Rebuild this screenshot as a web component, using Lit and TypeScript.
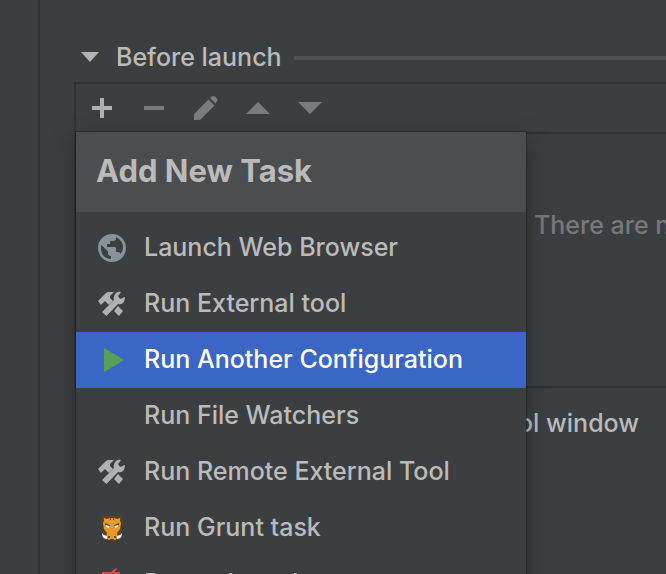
import { LitElement, html, css, svg, nothing, TemplateResult } from "lit";
import { customElement, property, state } from "lit/decorators.js";

type IconName =
  | "add" | "remove" | "edit" | "up" | "down" | "chevron"
  | "web" | "tools" | "run" | "grunt" | "gulp";

const shapes: Record<IconName, TemplateResult> = {
  add: svg`<path fill="#afb1b3" d="M14 6h4v8h8v4h-8v8h-4v-8H6v-4h8z"/>`,
  remove: svg`<path fill="#7b7c7d" d="M6 14h20v4H6z"/>`,
  edit: svg`<path fill="#7b7c7d" d="M4 28v-6L18.500 7.500l6 6L10 28zM20 6l2-1.500q1.500-1 3 0l2 2q1.500 1.500 0 3l-1.500 2z"/>`,
  up: svg`<path fill="#7b7c7d" d="M4 22 16 10l12 12z"/>`,
  down: svg`<path fill="#7b7c7d" d="M4 10h24L16 22z"/>`,
  chevron: svg`<path fill="#afb1b3" d="M7 10h18L16 20z"/>`,
  web: svg`<circle cx="16" cy="16" r="14" fill="#87939a"/>
    <path fill="#3c3f41" d="M20 5v1q0 3-3 3h-3v3h-3v3h8q1 0 1 1v4h2q2 0 2.500 2 2.500-3 2.500-6 0-7.500-7-11zM5.500 13 12 19.500V21q0 3 3 3v3Q5 26 5 16q0-2 .5-3z"/>`,
  tools: svg`<path fill="#afb1b3" d="M2 13 10 5q1-1 3-1h5l-4 4v2l3 3-4 4-4-4-4 4zM18 23l4-5 5 5-4 5z"/>
    <path fill="#afb1b3" d="M6 24 18 12q-1-4 2-7 2-2 5-1l-3 4 2 3 5-2q0 4-2 6t-5 1L10.500 28z"/>`,
  run: svg`<path fill="#5b9e57" d="M8 4v24l20-12z"/>`,
  grunt: svg`<path fill="#6b4013" d="M6 3l4 2 3-1h6l3 1 4-2v6l-1 2v9l-2 7-4 2h-6l-4-2-2-7v-9L6 9z"/>
    <path fill="#e89a2c" d="m8 6 3 1 3-1h4l3 1 3-1v3l1 2-1 6-3 4 1 5-3 2h-6l-3-2 1-5-3-4-1-6 1-2z"/>
    <path fill="#6b4013" d="m9 11 5 2v1l-5-1zm14 0-5 2v1l5-1zM14 5h1v3h-1zM17 5h1v3h-1zM12 24h2v2h-2zM18 24h2v2h-2zM14 27h4v1h-4z"/>
    <path fill="#fff" d="M10 13 13 14v2l-3-1zM22 13 19 14v2l3-1zM6 21v2q1 4 5 4v-3q-3 0-5-3zM26 21v2q-1 4-5 4v-3q3 0 5-3z"/>`,
  gulp: svg`<path fill="#d5494e" d="M6 4h9l3-3 3-1-2 4h5v2l-2 24H9L6 6z"/>`,
};

@customElement("ide-icon")
class IdeIcon extends LitElement {
  @property() name: IconName | "" = "";

  static styles = css`
    :host { display: block; flex: none; width: 32px; height: 32px; }
    .art { display: block; width: 100%; height: 100%; }
  `;

  render() {
    return this.name
      ? html`<svg class="art" viewBox="0 0 32 32" aria-hidden="true">${shapes[this.name]}</svg>`
      : nothing;
  }
}

interface Task { label: string; icon: IconName | ""; }

const tasks: Task[] = [
  { label: "Launch Web Browser", icon: "web" },
  { label: "Run External tool", icon: "tools" },
  { label: "Run Another Configuration", icon: "run" },
  { label: "Run File Watchers", icon: "" },
  { label: "Run Remote External Tool", icon: "tools" },
  { label: "Run Grunt task", icon: "grunt" },
  { label: "Run gulp task", icon: "gulp" },
];

@customElement("task-menu")
class TaskMenu extends LitElement {
  @state() selected = 2;

  static styles = css`
    :host {
      display: block;
      background: #3c3f41;
      box-shadow: 0 0 0 1px rgba(0, 0, 0, 0.25), 0 8px 24px rgba(0, 0, 0, 0.3);
    }
    .title {
      margin: 0;
      padding: 0 20px 2px;
      background: #4b4e50;
      font-size: 31px;
      font-weight: 700;
      line-height: 78px;
    }
    .items { margin: 0; padding: 8px 0; list-style: none; }
    .item {
      display: flex;
      align-items: center;
      gap: 16px;
      width: 100%;
      height: 56px;
      padding: 0 20px;
      border: 0;
      background: none;
      color: inherit;
      font: inherit;
      text-align: left;
      white-space: nowrap;
    }
    .label { padding-bottom: 2px; }
    .item.selected { background: #3b66c5; color: #fff; }
  `;

  render() {
    return html`
      <h2 class="title">Add New Task</h2>
      <ul class="items" role="menu">
        ${tasks.map((task, i) => html`
          <li role="none">
            <button class="item ${i === this.selected ? "selected" : ""}" role="menuitem"
              @mouseenter=${() => (this.selected = i)}>
              <ide-icon name=${task.icon}></ide-icon>
              <span class="label">${task.label}</span>
            </button>
          </li>`)}
      </ul>
    `;
  }
}

@customElement("app-root")
class AppRoot extends LitElement {
  static styles = css`
    :host {
      display: flex;
      height: 100vh;
      overflow: hidden;
      background: #3c3f41;
      color: #bbbbbb;
      font: 500 25px/32px Inter, "Liberation Sans", sans-serif;
    }
    .sidebar { flex: none; width: 38px; border-right: 2px solid #323232; }
    .content { flex: 1; min-width: 0; padding: 41px 0 0 34px; }
    .section { display: flex; align-items: center; height: 34px; margin-bottom: 7px; }
    .toggle {
      display: flex;
      align-items: center;
      gap: 10px;
      padding: 0;
      border: 0;
      background: none;
      color: inherit;
      font: inherit;
    }
    .label { padding-bottom: 2px; }
    .rule { flex: 1; height: 4px; margin-left: 12px; background: #515151; }
    .panel { border: 2px solid #323232; border-right: 0; }
    .anchor { position: relative; }
    .toolbar { display: flex; gap: 20px; padding: 8px 10px; }
    .tool { padding: 0; border: 0; background: none; }
    .menu { position: absolute; z-index: 1; top: 100%; left: 0; width: 450px; }
    .list {
      height: 254px;
      box-sizing: border-box;
      padding: 75px 0 0 458px;
      border-top: 2px solid #323232;
      overflow: hidden;
      color: #787878;
      white-space: nowrap;
    }
    .option { padding: 19px 0 0 444px; white-space: nowrap; }
  `;

  render() {
    const tools: [IconName, string][] = [
      ["add", "Add"], ["remove", "Remove"], ["edit", "Edit"],
      ["up", "Move up"], ["down", "Move down"],
    ];
    return html`
      <aside class="sidebar"></aside>
      <main class="content">
        <div class="section">
          <button class="toggle" aria-expanded="true">
            <ide-icon name="chevron"></ide-icon>
            <span class="label">Before launch</span>
          </button>
          <div class="rule"></div>
        </div>
        <section class="panel">
          <div class="anchor">
            <div class="toolbar" role="toolbar">
              ${tools.map(([icon, label]) => html`
                <button class="tool" aria-label=${label} ?disabled=${icon !== "add"}>
                  <ide-icon name=${icon}></ide-icon>
                </button>`)}
            </div>
            <task-menu class="menu"></task-menu>
          </div>
          <div class="list">There are no</div>
        </section>
        <div class="option">ol window</div>
      </main>
    `;
  }
}
